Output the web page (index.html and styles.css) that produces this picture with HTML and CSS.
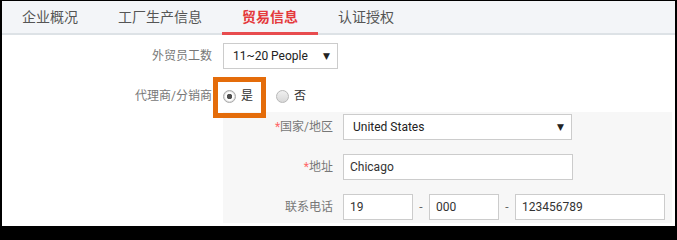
FILE: index.html
```html
<!DOCTYPE html>
<html lang="zh">
<head>
<meta charset="utf-8">
<title>贸易信息</title>
<link rel="stylesheet" href="styles.css">
</head>
<body>
<div class="frame">
  <nav class="tabs">
    <div class="tab">企业概况</div>
    <div class="tab">工厂生产信息</div>
    <div class="tab active">贸易信息</div>
    <div class="tab">认证授权</div>
  </nav>
  <div class="form">
    <div class="row">
      <div class="label">外贸员工数</div>
      <div class="select sel-small"><span>11~20 People</span><span class="arrow">▼</span></div>
    </div>
    <div class="row row-radio">
      <div class="label">代理商/分销商</div>
      <div class="radios">
        <label class="opt"><span class="radio checked"></span><span class="opt-text">是</span></label>
        <label class="opt opt-2"><span class="radio"></span><span class="opt-text">否</span></label>
      </div>
      <div class="highlight"></div>
    </div>
    <div class="panel">
      <div class="prow">
        <div class="plabel"><span class="req">*</span>国家/地区</div>
        <div class="select sel-wide"><span>United States</span><span class="arrow">▼</span></div>
      </div>
      <div class="prow">
        <div class="plabel"><span class="req">*</span>地址</div>
        <input class="field f-wide" type="text" value="Chicago">
      </div>
      <div class="prow">
        <div class="plabel">联系电话</div>
        <input class="field f-short" type="text" value="19">
        <span class="dash">-</span>
        <input class="field f-short" type="text" value="000">
        <span class="dash">-</span>
        <input class="field f-long" type="text" value="123456789">
      </div>
    </div>
  </div>
</div>
</body>
</html>
```
FILE: styles.css
```css
html, body {
  margin: 0;
  padding: 0;
  background: #000;
}
.frame {
  margin: 1px 2px 0 2px;
  width: 673px;
  height: 225px;
  background: #fff;
  font-family: Roboto, "Noto Sans CJK SC", sans-serif;
  overflow: hidden;
}
.tabs {
  display: flex;
  height: 32px;
  background: #f3f5f8;
  border-bottom: 2px solid #dde2e6;
}
.tab {
  position: relative;
  padding: 0 20px;
  line-height: 32px;
  font-size: 14px;
  color: #555;
  white-space: nowrap;
}
.tab.active {
  color: #e4393c;
  font-weight: bold;
}
.tab.active::after {
  content: "";
  position: absolute;
  left: 0;
  right: 0;
  bottom: -2px;
  height: 3px;
  background: #e84c4f;
}
.form {
  padding-top: 8px;
}
.row {
  position: relative;
  display: flex;
  align-items: center;
  gap: 11px;
  height: 26px;
  margin-bottom: 14px;
}
.row-radio {
  margin-bottom: 3px;
}
.label {
  width: 210px;
  text-align: right;
  font-size: 12px;
  line-height: 16px;
  color: #777;
}
.select {
  box-sizing: border-box;
  height: 26px;
  border: 1px solid #ccc;
  background: #fff;
  display: flex;
  align-items: center;
  justify-content: space-between;
  padding: 0 7px 0 9px;
  font-size: 12px;
  color: #222;
}
.sel-small { width: 115px; }
.sel-wide { width: 229px; }
.arrow {
  font-size: 9px;
  color: #222;
  font-family: "DejaVu Sans", sans-serif;
}
.radios {
  display: flex;
  align-items: center;
}
.opt {
  display: flex;
  align-items: center;
  gap: 5px;
  font-size: 12px;
  color: #333;
}
.opt-2 {
  margin-left: 23px;
}
.opt-text {
  line-height: 16px;
}
.radio {
  box-sizing: border-box;
  width: 13px;
  height: 13px;
  border-radius: 50%;
  border: 1px solid #b8b8b8;
  background: linear-gradient(#f0f0f0, #d8d8d8);
}
.radio.checked {
  background: radial-gradient(circle, #505050 0, #505050 2.5px, #fff 3px, #fff 4px, #e2e2e2 5px);
  border-color: #a9a9a9;
}
.highlight {
  position: absolute;
  left: 211px;
  top: -6px;
  width: 53px;
  height: 41px;
  box-sizing: border-box;
  border: 5px solid #e46c0a;
}
.panel {
  margin: 0 3px 0 221px;
  background: #f7f7f7;
  padding: 2px 0 3px;
}
.prow {
  display: flex;
  align-items: center;
  height: 26px;
  margin-bottom: 14px;
}
.prow:last-child {
  margin-bottom: 0;
}
.plabel {
  width: 110px;
  margin-right: 10px;
  text-align: right;
  font-size: 12px;
  line-height: 16px;
  color: #777;
}
.req {
  color: #f66;
}
.field {
  box-sizing: border-box;
  height: 26px;
  margin: 0;
  border: 1px solid #ccc;
  background: #fff;
  padding: 0 6px;
  font-family: Roboto, "Noto Sans CJK SC", sans-serif;
  font-size: 12px;
  color: #333;
  outline: none;
}
.f-wide { width: 230px; }
.f-short { width: 70px; }
.f-long { width: 150px; }
.dash {
  width: 16px;
  text-align: center;
  font-size: 12px;
  color: #666;
}
```
